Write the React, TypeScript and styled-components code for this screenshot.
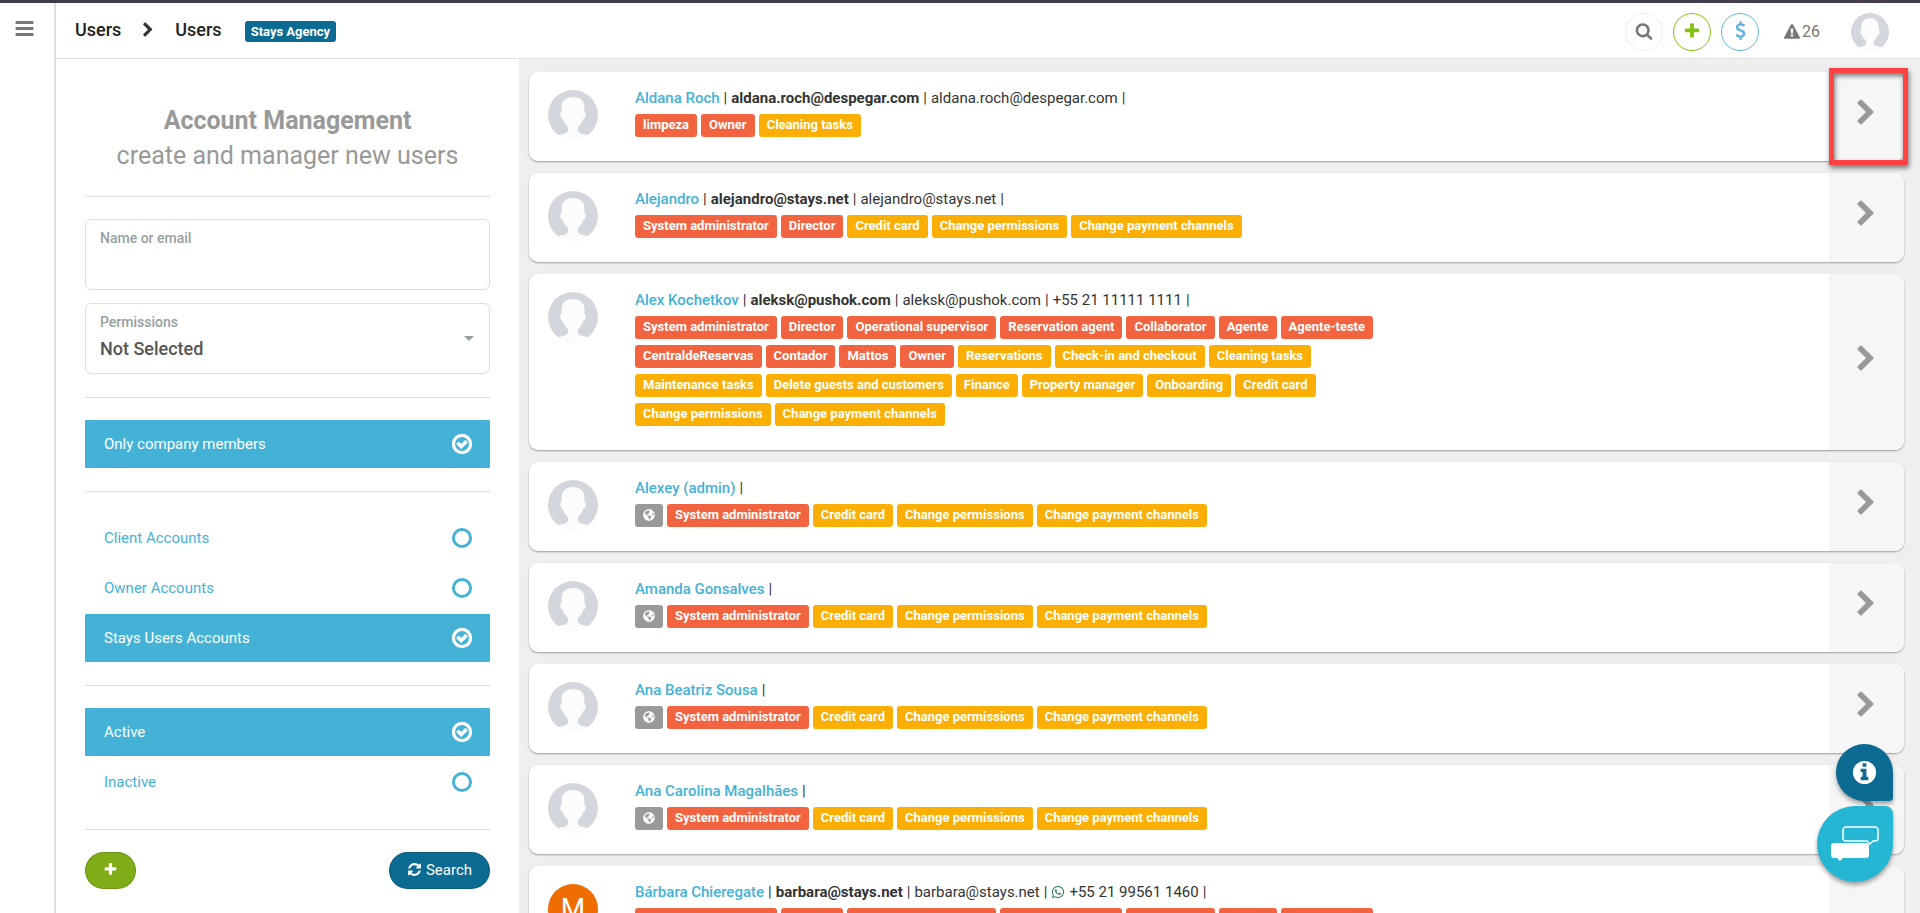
import React, { useState } from "react";
import styled, { createGlobalStyle } from "styled-components";
import { FaGlobeAmericas, FaWhatsapp } from "react-icons/fa";

const color = {
  topLine: "#443b4f",
  border: "#dddddd",
  page: "#efefef",
  text: "#333333",
  muted: "#999999",
  icon: "#777777",
  sky: "#44b2d7",
  navy: "#0b6b92",
  green: "#80ac18",
  role: "#f2633f",
  permission: "#fbaf05",
};

const GlobalStyle = createGlobalStyle`
  *, *::before, *::after { box-sizing: border-box; }
  body {
    margin: 0;
    font-family: Roboto, "Liberation Sans", sans-serif;
    font-size: 15px;
    line-height: 20px;
    color: ${color.text};
    background: ${color.page};
  }
  a { text-decoration: none; }
  button, input, select { font-family: inherit; }
`;

/* ---------- icons ---------- */

const paths = {
  bars: "M1664 1344v128q0 26-19 45t-45 19H192q-26 0-45-19t-19-45v-128q0-26 19-45t45-19h1408q26 0 45 19t19 45zm0-512v128q0 26-19 45t-45 19H192q-26 0-45-19t-19-45V832q0-26 19-45t45-19h1408q26 0 45 19t19 45zm0-512v128q0 26-19 45t-45 19H192q-26 0-45-19t-19-45V320q0-26 19-45t45-19h1408q26 0 45 19t19 45z",
  chevron:
    "M1363 877l-742 742q-19 19-45 19t-45-19l-166-166q-19-19-19-45t19-45l531-531-531-531q-19-19-19-45t19-45l166-166q19-19 45-19t45 19l742 742q19 19 19 45t-19 45z",
  search:
    "M1216 832q0-185-131.500-316.500t-316.500-131.500-316.500 131.500-131.500 316.500 131.500 316.500 316.500 131.500 316.500-131.500 131.500-316.500zm512 832q0 52-38 90t-90 38q-54 0-90-38l-343-342q-179 124-399 124-143 0-273.500-55.500t-225-150-150-225-55.500-273.500 55.500-273.500 150-225 225-150 273.500-55.500 273.500 55.500 225 150 150 225 55.500 273.500q0 220-124 399l343 343q37 37 37 90z",
  plus: "M1600 736v192q0 40-28 68t-68 28h-416v416q0 40-28 68t-68 28h-192q-40 0-68-28t-28-68v-416h-416q-40 0-68-28t-28-68v-192q0-40 28-68t68-28h416v-416q0-40 28-68t68-28h192q40 0 68 28t28 68v416h416q40 0 68 28t28 68z",
  dollar:
    "M1362 1185q0 153-99.500 263.500t-258.500 136.500v175q0 14-9 23t-23 9h-135q-13 0-22.500-9.500t-9.500-22.500v-175q-66-9-127.500-31t-101.500-44.500-74-48-46.500-37.500-17.500-18q-17-21-2-41l103-135q7-10 23-12 15-2 24 9l2 2q113 99 243 125 37 8 74 8 81 0 142.500-43t61.500-122q0-28-15-53t-33.500-42-58.500-37.500-66-32-80-32.500q-39-16-61.500-25t-61.500-26.500-62.500-31-56.500-35.500-53.500-42.500-43.500-49-35.500-58-21-66.500-8.500-78q0-138 98-242t255-134v-180q0-13 9.500-22.500t22.500-9.500h135q14 0 23 9t9 23v176q57 6 110.500 23t87 33.500 63.500 37.500 39 29 15 14q17 18 5 38l-81 146q-8 15-23 16-14 3-27-7-3-3-14.500-12t-39-26.500-58.500-32-74.500-26-85.500-11.500q-95 0-155 43t-60 111q0 26 8.500 48t29.500 41.500 39.500 33 56 31 60.500 27 70 27.500q53 20 81 31.500t76 35 75.500 42.500 62 50 53 63.500 31.500 76.500 13 94z",
  warning:
    "M1024 1375v-190q0-14-9.500-23.500t-22.500-9.500h-192q-13 0-22.500 9.500t-9.500 23.500v190q0 14 9.500 23.500t22.500 9.500h192q13 0 22.500-9.500t9.500-23.500zm-2-374l18-459q0-12-10-19-13-11-24-11h-220q-11 0-24 11-10 7-10 21l17 457q0 10 10 16.500t24 6.500h185q14 0 23.500-6.500t10.500-16.500zm-14-934l768 1408q35 63-2 126-17 29-46.500 46t-63.500 17h-1536q-34 0-63.500-17t-46.500-46q-37-63-2-126l768-1408q17-31 47-49t65-18 65 18 47 49z",
  info: "M1152 1376v-160q0-14-9-23t-23-9h-96v-512q0-14-9-23t-23-9h-320q-14 0-23 9t-9 23v160q0 14 9 23t23 9h96v320h-96q-14 0-23 9t-9 23v160q0 14 9 23t23 9h448q14 0 23-9t9-23zm-128-896v-160q0-14-9-23t-23-9h-192q-14 0-23 9t-9 23v160q0 14 9 23t23 9h192q14 0 23-9t9-23zM1664 896a768 768 0 1 1-1536 0a768 768 0 1 1 1536 0z",
  refresh:
    "M1639 1056q0 5-1 7-64 268-268 434.500t-478 166.500q-146 0-282.500-55t-243.500-157l-129 129q-19 19-45 19t-45-19-19-45v-448q0-26 19-45t45-19h448q26 0 45 19t19 45-19 45l-137 137q71 66 161 102t187 36q134 0 250-65t186-179q11-17 53-117 8-23 30-23h192q13 0 22.500 9.500t9.500 22.500zm25-800v448q0 26-19 45t-45 19h-448q-26 0-45-19t-19-45 19-45l138-138q-148-137-349-137-134 0-250 65t-186 179q-11 17-53 117-8 23-30 23h-199q-13 0-22.500-9.500t-9.500-22.500v-7q65-268 270-434.500t480-166.500q146 0 284 55.500t245 156.500l130-129q19-19 45-19t45 19 19 45z",
  check:
    "M1299 813l-422 422q-19 19-45 19t-45-19l-294-294q-19-19-19-45t19-45l102-102q19-19 45-19t45 19l147 147 275-275q19-19 45-19t45 19l102 102q19 19 19 45t-19 45z",
};

const Svg = styled.svg`
  display: block;
  flex: none;
  fill: currentColor;
`;

const Icon = ({ name, size }: { name: keyof typeof paths; size: number }) => (
  <Svg width={size} height={size} viewBox="0 0 1792 1792" fillRule="evenodd" aria-hidden="true">
    <path d={paths[name]} />
  </Svg>
);

const Ring = ({ checked }: { checked: boolean }) => (
  <Svg width={24} height={24} viewBox="0 0 1792 1792" aria-hidden="true">
    <circle
      cx="896"
      cy="896"
      r="640"
      fill="none"
      stroke="currentColor"
      strokeWidth={checked ? 240 : 220}
    />
    {checked && <path d={paths.check} />}
  </Svg>
);

const Silhouette = ({ size }: { size: number }) => (
  <Svg width={size} height={size} viewBox="0 0 50 50" role="img" aria-label="User photo">
    <circle cx="25" cy="25" r="25" fill="#d3d6dc" />
    <path
      d="M25 7c-7 0-11.500 4-11.500 10.500l.2 4.500c-1.500 0-1.700 1.600-1.200 4 .4 1.800 1.100 2.600 2.100 2.700C15.500 32.500 18 35 20 37c.6 4-.4 5.600-3 6.400-3 .9-5.500 1.200-7.600 1.900C13.700 48.500 19 50 25 50s11.300-1.500 15.600-4.700c-2.100-.7-4.600-1-7.600-1.900-2.600-.8-3.600-2.400-3-6.400 2-2 4.500-4.500 5.400-8.300 1-.1 1.700-.9 2.100-2.700.5-2.400.3-4-1.200-4l.2-4.500C36.500 11 32 7 25 7z"
      fill="#fbfdfd"
    />
  </Svg>
);

/* ---------- page frame ---------- */

const Page = styled.div`
  display: flex;
  height: 100vh;
  overflow: hidden;
  border-top: 3px solid ${color.topLine};
`;

const Rail = styled.nav`
  flex: none;
  width: 56px;
  padding: 15px 14px;
  background: #fff;
  border-right: 2px solid ${color.border};
`;

const RailButton = styled.button`
  display: block;
  padding: 0;
  border: 0;
  background: none;
  color: ${color.icon};
  cursor: pointer;
`;

const Main = styled.div`
  flex: 1;
  min-width: 0;
  display: flex;
  flex-direction: column;
`;

const Header = styled.header`
  flex: none;
  display: flex;
  align-items: center;
  justify-content: space-between;
  height: 56px;
  padding: 0 31px 0 19px;
  background: #fff;
  border-bottom: 1px solid ${color.border};
`;

const Breadcrumb = styled.nav`
  display: flex;
  align-items: center;
  gap: 19px;
  font-size: 18px;
  font-weight: 500;
  padding-bottom: 2px;
`;

const Crumb = styled.a`
  color: #222;
`;

const AgencyBadge = styled.span`
  margin: 4px 0 0 4px;
  padding: 0 6px;
  border-radius: 3px;
  background: ${color.navy};
  color: #fff;
  font-size: 13px;
  font-weight: 700;
  line-height: 21px;
`;

const Tools = styled.div`
  display: flex;
  align-items: center;
  gap: 10px;
  padding-top: 2px;
`;

const RoundButton = styled.button<{ $tone: string; $ring: string }>`
  display: flex;
  align-items: center;
  justify-content: center;
  width: 38px;
  height: 38px;
  padding: 0 0 2px;
  border: 1px solid ${(p) => p.$ring};
  border-radius: 50%;
  background: #fff;
  color: ${(p) => p.$tone};
  cursor: pointer;
`;

const Alerts = styled.a`
  display: flex;
  align-items: center;
  gap: 2px;
  margin: 0 21px 0 15px;
  font-size: 16px;
  color: ${color.icon};
`;

const Columns = styled.div`
  flex: 1;
  min-height: 0;
  display: flex;
`;

/* ---------- filter panel ---------- */

const Panel = styled.form`
  flex: none;
  width: 463px;
  padding: 44px 29px 24px;
  background: #fff;
`;

const Title = styled.h1`
  margin: 0;
  text-align: center;
  font-size: 25px;
  line-height: 35px;
  font-weight: 700;
  color: ${color.muted};
`;

const Subtitle = styled.span`
  display: block;
  font-weight: 400;
`;

const Rule = styled.hr`
  height: 1px;
  margin: 23px 0 22px;
  border: 0;
  background: ${color.border};
`;

const Field = styled.label`
  display: flex;
  flex-direction: column;
  position: relative;
  height: 71px;
  padding: 8px 14px;
  border: 1px solid ${color.border};
  border-radius: 6px;

  & + & {
    margin-top: 13px;
  }
`;

const FieldLabel = styled.span`
  font-size: 14px;
  font-weight: 500;
  color: #95a1a1;
`;

const TextInput = styled.input`
  width: 100%;
  height: 32px;
  padding: 0;
  border: 0;
  outline: 0;
  background: none;
  font-size: 18px;
  font-weight: 500;
  color: #555;
`;

const Select = styled.select`
  appearance: none;
  width: 100%;
  height: 32px;
  padding: 0;
  border: 0;
  outline: 0;
  background: none;
  font-size: 18px;
  font-weight: 500;
  color: #555;
`;

const Caret = styled.span`
  position: absolute;
  top: 32px;
  right: 15px;
  border: 5px solid transparent;
  border-top-color: #95a1a1;
  border-bottom: 0;
  pointer-events: none;
`;

const Options = styled.div`
  display: flex;
  flex-direction: column;
  gap: 2px;
`;

const OptionRow = styled.label<{ $on: boolean }>`
  display: flex;
  align-items: center;
  justify-content: space-between;
  position: relative;
  height: 48px;
  padding: 0 16px 0 19px;
  border-radius: 1px;
  background: ${(p) => (p.$on ? color.sky : "transparent")};
  color: ${(p) => (p.$on ? "#fff" : color.sky)};
  cursor: pointer;
`;

const HiddenCheck = styled.input`
  position: absolute;
  inset: 0;
  margin: 0;
  opacity: 0;
  cursor: pointer;
`;

const Actions = styled.div`
  display: flex;
  justify-content: space-between;
`;

const PillButton = styled.button<{ $bg: string }>`
  display: flex;
  align-items: center;
  gap: 4px;
  height: 37px;
  padding: 0 17px 2px;
  border: 1px solid rgba(0, 0, 0, 0.15);
  border-radius: 19px;
  background: ${(p) => p.$bg};
  color: #fff;
  font-size: 15px;
  cursor: pointer;
`;

/* ---------- user list ---------- */

const List = styled.main`
  flex: 1;
  min-width: 0;
  display: flex;
  flex-direction: column;
  gap: 12px;
  padding: 13px 16px 13px 10px;
  overflow-y: auto;
  scrollbar-width: none;
`;

const Card = styled.article`
  flex: none;
  display: flex;
  position: relative;
  border-radius: 9px;
  background: #fff;
  box-shadow: 0 1px 2px rgba(0, 0, 0, 0.35);
`;

const Photo = styled.div`
  flex: none;
  width: 106px;
  padding: 18px 0 0 19px;
`;

const Initial = styled.div`
  display: flex;
  align-items: center;
  justify-content: center;
  width: 50px;
  height: 50px;
  border-radius: 50%;
  background: #ef6c00;
  color: #fff;
  font-size: 28px;
`;

const Info = styled.div`
  flex: 1;
  min-width: 0;
  padding: 16px 0 24px;
`;

const Contact = styled.div`
  display: flex;
  flex-wrap: wrap;
  align-items: center;
  gap: 4px;
  line-height: 20px;
`;

const UserName = styled.a`
  font-weight: 500;
  color: ${color.sky};
`;

const Tags = styled.ul`
  display: flex;
  flex-wrap: wrap;
  gap: 6px 4px;
  width: 65%;
  margin: 6px 0 0;
  padding: 0;
  list-style: none;
`;

const Tag = styled.li<{ $bg: string }>`
  display: flex;
  align-items: center;
  height: 23px;
  padding: 0 8px 2px;
  border-radius: 3px;
  background: ${(p) => p.$bg};
  color: #fff;
  font-size: 13px;
  font-weight: 700;
`;

const OpenLink = styled.a`
  flex: none;
  display: flex;
  align-items: center;
  justify-content: center;
  width: 75px;
  padding: 0 2px 7px 0;
  border-radius: 0 9px 9px 0;
  background: #f6f6f6;
  color: ${color.muted};
`;

const Highlight = styled.div`
  position: absolute;
  top: -4px;
  right: -4px;
  width: 79px;
  height: 97px;
  border: 5px solid #ff4343;
  box-shadow: 1px 3px 5px rgba(0, 0, 0, 0.5), inset 1px 3px 5px rgba(0, 0, 0, 0.5);
  pointer-events: none;
`;

/* ---------- floating helpers ---------- */

const Floating = styled.div`
  position: fixed;
  right: 27px;
  bottom: 31px;
  display: flex;
  flex-direction: column;
  align-items: flex-end;
  gap: 5px;
`;

const Bubble = styled.button<{ $size: number; $bg: string; $radius: string }>`
  display: flex;
  align-items: center;
  justify-content: center;
  width: ${(p) => p.$size}px;
  height: ${(p) => p.$size}px;
  padding: 0;
  border: 0;
  border-radius: ${(p) => p.$radius};
  background: ${(p) => p.$bg};
  color: #fff;
  box-shadow: 0 3px 4px rgba(0, 0, 0, 0.35);
  cursor: pointer;
`;

/* ---------- data ---------- */

type User = {
  name: string;
  login?: string;
  email?: string;
  phone?: string;
  whatsapp?: boolean;
  initial?: string;
  global?: boolean;
  roles: string[];
  permissions: string[];
};

const adminAccess = {
  global: true,
  roles: ["System administrator"],
  permissions: ["Credit card", "Change permissions", "Change payment channels"],
};

const fullAccess = {
  roles: [
    "System administrator",
    "Director",
    "Operational supervisor",
    "Reservation agent",
    "Collaborator",
    "Agente",
    "Agente-teste",
    "CentraldeReservas",
    "Contador",
    "Mattos",
    "Owner",
  ],
  permissions: [
    "Reservations",
    "Check-in and checkout",
    "Cleaning tasks",
    "Maintenance tasks",
    "Delete guests and customers",
    "Finance",
    "Property manager",
    "Onboarding",
    "Credit card",
    "Change permissions",
    "Change payment channels",
  ],
};

const users: User[] = [
  {
    name: "Aldana Roch",
    login: "aldana.roch@despegar.com",
    email: "aldana.roch@despegar.com",
    roles: ["limpeza", "Owner"],
    permissions: ["Cleaning tasks"],
  },
  {
    name: "Alejandro",
    login: "alejandro@stays.net",
    email: "alejandro@stays.net",
    roles: ["System administrator", "Director"],
    permissions: ["Credit card", "Change permissions", "Change payment channels"],
  },
  {
    name: "Alex Kochetkov",
    login: "aleksk@pushok.com",
    email: "aleksk@pushok.com",
    phone: "+55 21 11111 1111",
    ...fullAccess,
  },
  { name: "Alexey (admin)", ...adminAccess },
  { name: "Amanda Gonsalves", ...adminAccess },
  { name: "Ana Beatriz Sousa", ...adminAccess },
  { name: "Ana Carolina Magalhães", ...adminAccess },
  {
    name: "Bárbara Chieregate",
    login: "barbara@stays.net",
    email: "barbara@stays.net",
    phone: "+55 21 99561 1460",
    whatsapp: true,
    initial: "M",
    ...fullAccess,
  },
];

const filterGroups = [
  ["Only company members"],
  ["Client Accounts", "Owner Accounts", "Stays Users Accounts"],
  ["Active", "Inactive"],
];

const UserCard = ({ user, highlighted }: { user: User; highlighted: boolean }) => (
  <Card>
    <Photo>{user.initial ? <Initial>{user.initial}</Initial> : <Silhouette size={50} />}</Photo>
    <Info>
      <Contact>
        <UserName href="#user">{user.name}</UserName>
        <span>|</span>
        {user.login && (
          <>
            <strong>{user.login}</strong>
            <span>|</span>
          </>
        )}
        {user.email && (
          <>
            <span>{user.email}</span>
            <span>|</span>
          </>
        )}
        {user.phone && (
          <>
            {user.whatsapp && <FaWhatsapp size={14} color="#2f7d55" />}
            <span>{user.phone}</span>
            <span>|</span>
          </>
        )}
      </Contact>
      <Tags>
        {user.global && (
          <Tag $bg={color.muted} aria-label="Global user">
            <FaGlobeAmericas size={12} />
          </Tag>
        )}
        {user.roles.map((r) => (
          <Tag key={r} $bg={color.role}>
            {r}
          </Tag>
        ))}
        {user.permissions.map((p) => (
          <Tag key={p} $bg={color.permission}>
            {p}
          </Tag>
        ))}
      </Tags>
    </Info>
    <OpenLink href="#user" aria-label={`Open ${user.name}`}>
      <Icon name="chevron" size={28} />
    </OpenLink>
    {highlighted && <Highlight />}
  </Card>
);

export default function App() {
  const [active, setActive] = useState<string[]>([
    "Only company members",
    "Stays Users Accounts",
    "Active",
  ]);
  const toggle = (name: string) =>
    setActive((list) => (list.includes(name) ? list.filter((n) => n !== name) : [...list, name]));

  return (
    <>
      <GlobalStyle />
      <Page>
        <Rail>
          <RailButton aria-label="Menu">
            <Icon name="bars" size={21} />
          </RailButton>
        </Rail>
        <Main>
          <Header>
            <Breadcrumb aria-label="Breadcrumb">
              <Crumb href="#users">Users</Crumb>
              <Icon name="chevron" size={16} />
              <Crumb href="#users">Users</Crumb>
              <AgencyBadge>Stays Agency</AgencyBadge>
            </Breadcrumb>
            <Tools>
              <RoundButton $tone={color.icon} $ring="#eeeeee" aria-label="Search">
                <Icon name="search" size={18} />
              </RoundButton>
              <RoundButton $tone="#83c412" $ring="#83c412" aria-label="Add">
                <Icon name="plus" size={18} />
              </RoundButton>
              <RoundButton $tone="#62b5dd" $ring="#62b5dd" aria-label="Payments">
                <Icon name="dollar" size={19} />
              </RoundButton>
              <Alerts href="#alerts">
                <Icon name="warning" size={16} />
                26
              </Alerts>
              <Silhouette size={38} />
            </Tools>
          </Header>
          <Columns>
            <Panel onSubmit={(e) => e.preventDefault()}>
              <Title>
                Account Management
                <Subtitle>create and manager new users</Subtitle>
              </Title>
              <Rule />
              <Field>
                <FieldLabel>Name or email</FieldLabel>
                <TextInput type="text" />
              </Field>
              <Field>
                <FieldLabel>Permissions</FieldLabel>
                <Select defaultValue="">
                  <option value="">Not Selected</option>
                </Select>
                <Caret />
              </Field>
              <Rule />
              {filterGroups.map((group) => (
                <React.Fragment key={group[0]}>
                  <Options>
                    {group.map((name) => {
                      const on = active.includes(name);
                      return (
                        <OptionRow key={name} $on={on}>
                          {name}
                          <HiddenCheck type="checkbox" checked={on} onChange={() => toggle(name)} />
                          <Ring checked={on} />
                        </OptionRow>
                      );
                    })}
                  </Options>
                  <Rule />
                </React.Fragment>
              ))}
              <Actions>
                <PillButton type="button" $bg={color.green} aria-label="Add user">
                  <Icon name="plus" size={15} />
                </PillButton>
                <PillButton type="submit" $bg={color.navy}>
                  <Icon name="refresh" size={15} />
                  Search
                </PillButton>
              </Actions>
            </Panel>
            <List>
              {users.map((user, i) => (
                <UserCard key={user.name} user={user} highlighted={i === 0} />
              ))}
            </List>
          </Columns>
        </Main>
      </Page>
      <Floating>
        <Bubble $size={57} $bg={color.navy} $radius="50% 50% 4px 50%" aria-label="Information">
          <Icon name="info" size={27} />
        </Bubble>
        <Bubble $size={76} $bg="#24b6d2" $radius="50% 8px 50% 50%" aria-label="Chat">
          <Svg width={48} height={36} viewBox="0 0 48 36" aria-hidden="true">
            <path
              d="M15 1h29a3 3 0 0 1 3 3v8a3 3 0 0 1-3 3h-2l-3 3-3-3H15a3 3 0 0 1-3-3V4a3 3 0 0 1 3-3z"
              fill="none"
              stroke="currentColor"
              strokeWidth="1.500"
            />
            <path d="M3 17h32a3 3 0 0 1 3 3v9a3 3 0 0 1-3 3H12l-3 3-3-3H3a3 3 0 0 1-3-3v-9a3 3 0 0 1 3-3z" />
          </Svg>
        </Bubble>
      </Floating>
    </>
  );
}
